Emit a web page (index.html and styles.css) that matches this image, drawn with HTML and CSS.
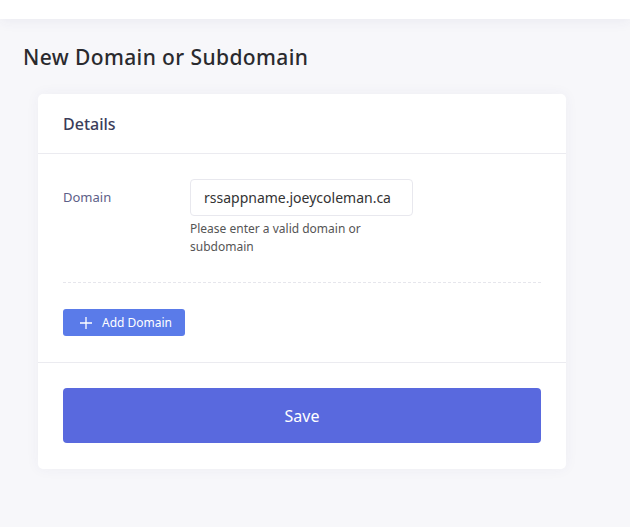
FILE: index.html
```html
<!DOCTYPE html>
<html lang="en">
<head>
    <meta charset="UTF-8">
    <meta name="viewport" content="width=device-width, initial-scale=1.0">
    <title>New Domain or Subdomain</title>
    <link rel="stylesheet" href="styles.css">
</head>
<body>
    <header class="topbar"></header>

    <main class="page">
        <h1 class="page-title">New Domain or Subdomain</h1>

        <div class="card">
            <div class="card-header">
                <h2>Details</h2>
            </div>

            <div class="card-body">
                <div class="field-row">
                    <label class="field-label" for="domain">Domain</label>
                    <div class="field-control">
                        <input id="domain" class="text-input" type="text" value="rssappname.joeycoleman.ca">
                        <p class="help-text">Please enter a valid domain or subdomain</p>
                    </div>
                </div>

                <div class="dashed-sep"></div>

                <button class="btn-add" type="button">
                    <svg width="12" height="12" viewBox="0 0 12 12" fill="none" stroke="#fff" stroke-width="1.3">
                        <path d="M6 0v12M0 6h12"/>
                    </svg>
                    Add Domain
                </button>
            </div>

            <div class="card-footer">
                <button class="btn-save" type="submit">Save</button>
            </div>
        </div>
    </main>
</body>
</html>
```

FILE: styles.css
```css
body {
    font-family: "Noto Sans", "Open Sans", sans-serif;
    background-color: #f7f7fa;
    margin: 0;
    padding: 0;
    height: 527px;
    overflow: hidden;
}

.topbar {
    height: 19px;
    background-color: #fff;
    box-shadow: 0 2px 14px rgba(60, 60, 110, 0.07);
}

.page {
    padding: 23px 23px 0 23px;
}

.page-title {
    margin: 0 0 22px 0;
    font-size: 21px;
    line-height: 30px;
    font-weight: 500;
    letter-spacing: 0.4px;
    color: #2a2a2e;
}

.card {
    margin-left: 15px;
    width: 528px;
    background-color: #fff;
    border-radius: 5px;
    box-shadow: 0 0 14px rgba(60, 60, 110, 0.05);
}

.card-header {
    height: 59px;
    padding: 0 25px;
    display: flex;
    align-items: center;
    border-bottom: 1px solid #ebebf0;
}

.card-header h2 {
    margin: 0;
    font-size: 16px;
    font-weight: 500;
    color: #3b3d5a;
}

.card-body {
    padding: 25px 25px 26px 25px;
    border-bottom: 1px solid #ebebf0;
}

.field-row {
    display: flex;
}

.field-label {
    width: 127px;
    flex-shrink: 0;
    font-size: 13px;
    line-height: 37px;
    color: #5d6088;
}

.field-control {
    width: 223px;
}

.text-input {
    box-sizing: border-box;
    width: 223px;
    height: 37px;
    padding: 0 13px;
    border: 1px solid #e8e8ee;
    border-radius: 4px;
    font-family: inherit;
    font-size: 14px;
    color: #333;
    outline: none;
}

.help-text {
    margin: 4px 0 0 0;
    font-size: 12px;
    line-height: 18px;
    color: #555;
}

.dashed-sep {
    margin-top: 26px;
    border-top: 1px dashed #e6e6ec;
}

.btn-add {
    margin-top: 26px;
    height: 27px;
    width: 122px;
    display: flex;
    align-items: center;
    gap: 10px;
    padding: 0 0 0 17px;
    background-color: #5a7be9;
    color: #fff;
    border: none;
    border-radius: 3px;
    font-family: inherit;
    font-size: 12px;
    cursor: pointer;
}

.card-footer {
    padding: 25px 25px 26px 25px;
}

.btn-save {
    width: 100%;
    height: 55px;
    background-color: #5969de;
    color: #fff;
    border: none;
    border-radius: 4px;
    font-family: inherit;
    font-size: 16px;
    cursor: pointer;
}
```
